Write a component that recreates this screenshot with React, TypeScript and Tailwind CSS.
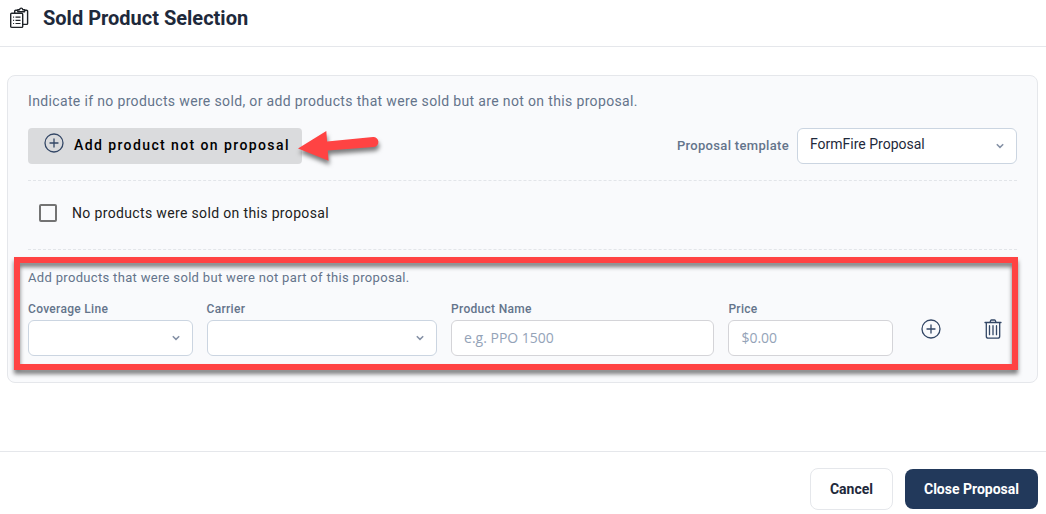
import { useState } from "react";
import type { ReactNode } from "react";

type SelectBoxProps = {
  id: string;
  options: string[];
};

const labelClass = "text-xs leading-4 font-medium tracking-wide text-[#64748b]";
const inputClass =
  "h-9 w-full rounded-md border border-[#d4d4d8] bg-white px-3 pb-0.5 font-['Open_Sans',sans-serif] text-sm text-[#1e293b] outline-none placeholder:text-[#94a3b8]";

function ClipboardIcon() {
  return (
    <svg viewBox="0 0 20 22" className="h-[22px] w-5" fill="none" stroke="#1f2328" strokeWidth="1.4" strokeLinejoin="round" aria-hidden="true">
      <rect x="1.7" y="6.2" width="12" height="14.2" rx="1" />
      <path d="M5.7 6V4.2a1 1 0 0 1 1-1h2.1M15.6 3.2h2a1 1 0 0 1 1 1v12.2a1 1 0 0 1-1 1h-3.8" />
      <path d="M8.8 4.8V2.7h1.8c.2-1 .8-1.6 1.6-1.6s1.4.6 1.6 1.6h1.8v2.1z" />
      <path d="M4.1 10.1h1M6.5 10.1h5M4.1 13.3h1M6.5 13.3h5M4.1 16.5h1M6.5 16.5h5" strokeWidth="1.2" />
    </svg>
  );
}

function PlusCircleIcon() {
  return (
    <svg viewBox="0 0 20 20" className="size-5" fill="none" stroke="#334766" strokeWidth="1.3" strokeLinecap="round" aria-hidden="true">
      <circle cx="10" cy="10" r="9" />
      <path d="M10 6v8M6 10h8" />
    </svg>
  );
}

function TrashIcon() {
  return (
    <svg viewBox="0 0 18 20" className="h-5 w-[18px]" fill="none" stroke="#334766" strokeWidth="1.3" strokeLinecap="round" strokeLinejoin="round" aria-hidden="true">
      <path d="M1 3.5h16M6 3.3l.7-1.700a1 1 0 0 1 .9-.6h2.800a1 1 0 0 1 .9.6l.7 1.700" />
      <path d="M2.300 3.700v13.500a2 2 0 0 0 2 2h9.400a2 2 0 0 0 2-2V3.700" />
      <path d="M5.500 6.700v9M9 6.700v9M12.500 6.700v9" />
    </svg>
  );
}

function SelectBox({ id, options }: SelectBoxProps) {
  return (
    <div className="relative">
      <select id={id} className="h-9 w-full appearance-none rounded-md border border-[#cbd5e1] bg-white pr-8 pb-1 pl-3 text-sm text-[#1e293b] outline-none">
        {options.map((option) => (
          <option key={option}>{option}</option>
        ))}
      </select>
      <svg viewBox="0 0 8 6" className="pointer-events-none absolute top-[15px] right-[13px] h-1.5 w-2" fill="none" stroke="#8490a5" strokeWidth="1.5" aria-hidden="true">
        <path d="M.8 1.200 4 4.400l3.200-3.200" />
      </svg>
    </div>
  );
}

function Field({ id, label, children }: { id: string; label: string; children: ReactNode }) {
  return (
    <div className="flex min-w-0 flex-col gap-[3px]">
      <label htmlFor={id} className={labelClass}>
        {label}
      </label>
      {children}
    </div>
  );
}

function PointerArrow() {
  return (
    <svg
      viewBox="0 0 82 32"
      className="pointer-events-none absolute top-0.5 left-full -ml-1 h-8 w-[82px] overflow-visible drop-shadow-[1px_4px_2px_rgba(0,0,0,0.5)]"
      fill="#ff4343"
      aria-hidden="true"
    >
      <path d="M0 18.500 28.300 1l.8 10.500L75 7a5 5 0 0 1 .8 10L29.800 20.500l.7 10.200z" />
    </svg>
  );
}

export default function App() {
  const [noneSold, setNoneSold] = useState(false);

  return (
    <div className="bg-white font-[Roboto,sans-serif] text-[#1e293b]">
      <header className="flex items-center gap-3.5 border-b border-[#e5e7eb] px-[9px] pt-1 pb-3.5">
        <ClipboardIcon />
        <h1 className="text-xl leading-7 font-bold">Sold Product Selection</h1>
      </header>

      <main className="pt-7 pr-2 pb-[68px] pl-[7px]">
        <div className="rounded-lg border border-[#e5e7eb] bg-[#f9fafc] px-5 pt-[15px] pb-[26px]">
          <p className="text-sm leading-5 tracking-wide text-[#64748b]">
            Indicate if no products were sold, or add products that were sold but are not on this proposal.
          </p>

          <div className="mt-[17px] flex items-center justify-between">
            <div className="relative">
              <button type="button" className="flex h-9 items-center gap-2.5 rounded bg-[#dadbdd] pr-3 pb-0.5 pl-4 text-sm font-medium tracking-widest text-black">
                <span className="pb-1">
                  <PlusCircleIcon />
                </span>
                Add product not on proposal
              </button>
              <PointerArrow />
            </div>
            <div className="flex items-center gap-2">
              <label htmlFor="template" className="text-[13px] leading-5 font-medium tracking-wide text-[#64748b]">
                Proposal template
              </label>
              <div className="w-[220px]">
                <SelectBox id="template" options={["FormFire Proposal"]} />
              </div>
            </div>
          </div>

          <div className="mt-4 border-y border-dashed border-[#e2e5e9] pt-5 pb-6">
            <label className="flex items-center gap-[15px] pl-[11px] text-sm leading-6 tracking-wide text-[#212121]">
              <input
                type="checkbox"
                checked={noneSold}
                onChange={(event) => setNoneSold(event.target.checked)}
                className="size-[18px] appearance-none rounded-[2px] border-2 border-[#737373] checked:bg-[#22395b]"
              />
              No products were sold on this proposal
            </label>
          </div>

          <section className="relative pt-[18px]">
            <p className="text-[13px] leading-5 tracking-wide text-[#64748b]">
              Add products that were sold but were not part of this proposal.
            </p>
            <div className="mt-[13px] grid grid-cols-[5fr_7fr_8fr_5fr_auto] items-center gap-3.5">
              <Field id="coverage" label="Coverage Line">
                <SelectBox id="coverage" options={[""]} />
              </Field>
              <Field id="carrier" label="Carrier">
                <SelectBox id="carrier" options={[""]} />
              </Field>
              <Field id="product" label="Product Name">
                <input id="product" type="text" placeholder="e.g. PPO 1500" className={inputClass} />
              </Field>
              <Field id="price" label="Price">
                <input id="price" type="text" placeholder="$0.00" className={inputClass} />
              </Field>
              <div className="flex gap-3.5">
                <button type="button" aria-label="Add row" className="flex size-12 items-center justify-center">
                  <PlusCircleIcon />
                </button>
                <button type="button" aria-label="Delete row" className="flex size-12 items-center justify-center">
                  <TrashIcon />
                </button>
              </div>
            </div>
            <div className="pointer-events-none absolute top-[7px] -right-px -bottom-3.5 -left-3.5 border-6 border-[#ff4343] drop-shadow-[0_4px_2px_rgba(0,0,0,0.5)]" />
          </section>
        </div>
      </main>

      <footer className="flex items-center justify-end gap-3 border-t border-[#e5e7eb] pt-4 pr-2 pb-1">
        <button type="button" className="h-[42px] rounded-lg border border-[#e5e7eb] bg-white px-[19px] text-sm font-bold">
          Cancel
        </button>
        <button type="button" className="h-10 rounded-lg bg-[#22395b] px-[19px] text-sm font-bold text-white">
          Close Proposal
        </button>
      </footer>
    </div>
  );
}
